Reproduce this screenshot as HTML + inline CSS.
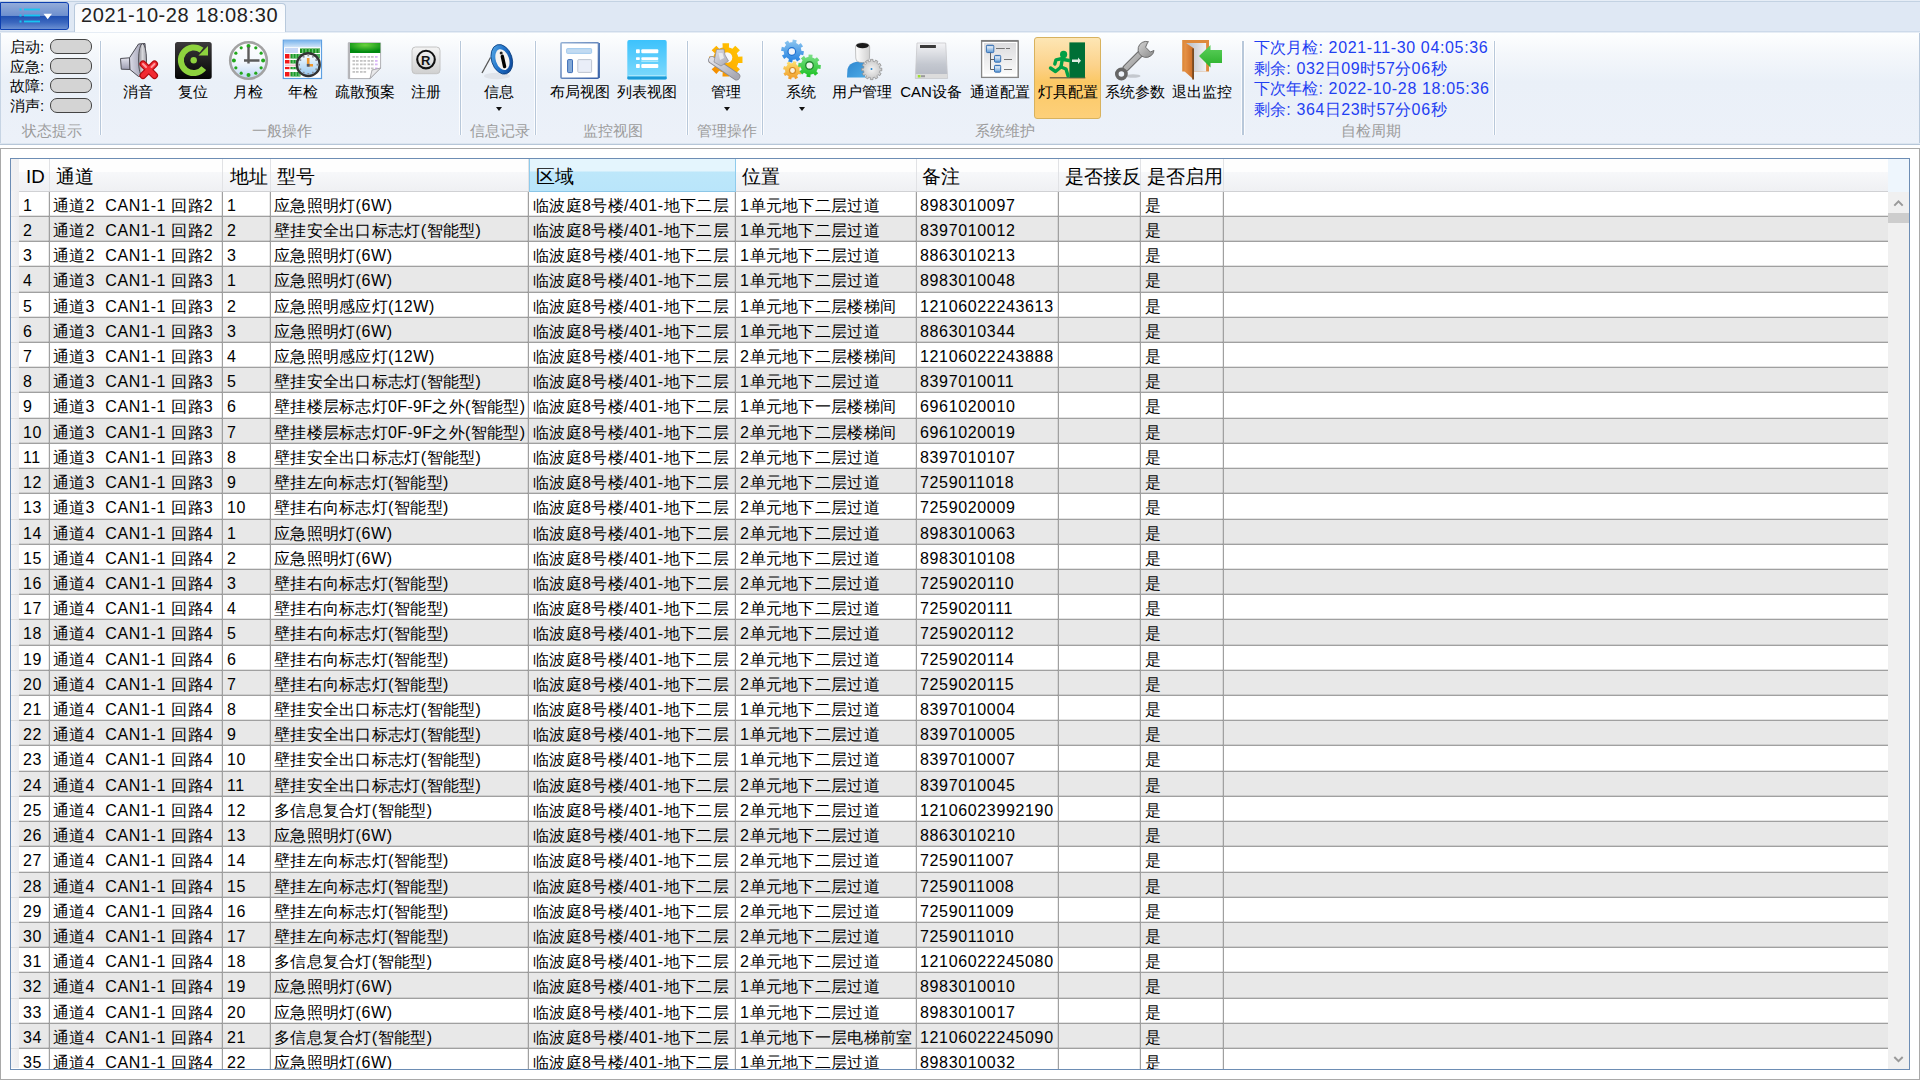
<!DOCTYPE html>
<html><head><meta charset="utf-8"><title>灯具配置</title>
<style>
html,body{margin:0;padding:0}
body{width:1920px;height:1080px;overflow:hidden;position:relative;background:#fff;font-family:'Liberation Sans',sans-serif;color:#000}
.a{position:absolute}
.t{position:absolute;white-space:nowrap;line-height:1}
.lb{position:absolute;white-space:nowrap;line-height:1;font-size:15px;text-align:center}
.gl{position:absolute;white-space:nowrap;line-height:1;font-size:15px;color:#9c9c9c;text-align:center}
.sep{position:absolute;width:1px;top:41px;height:94px;background:#b8c8da}
.pill{position:absolute;left:49.5px;width:40.5px;height:13.5px;border:1.8px solid #444;border-radius:7px;background:#d4d4d4}
.arr{position:absolute;width:0;height:0;border-left:3.5px solid transparent;border-right:3.5px solid transparent;border-top:4px solid #111}
.cell{position:absolute;white-space:nowrap;line-height:1;font-size:16px;letter-spacing:0.3px}
.l{letter-spacing:0.65px}
.hd{position:absolute;white-space:nowrap;line-height:1;font-size:18.7px}
</style></head><body>

<div class="a" style="left:0;top:0;width:1920px;height:31px;background:#dfe8f4"></div>
<div class="a" style="left:0;top:0;width:1920px;height:1px;background:#e6edf6"></div>
<div class="a" style="left:0;top:1px;width:1920px;height:1px;background:#c3d2e2"></div>
<div class="a" style="left:0;top:31px;width:1920px;height:1px;background:#cddaea"></div>
<div class="a" style="left:0;top:2px;width:67px;height:26px;border:1.6px solid #0d3fb0;border-radius:0 3px 3px 0;
background:linear-gradient(#93acd9 0%,#6e90cf 48%,#1f4fb1 50%,#3c68bf 75%,#6b90d2 100%)"></div>
<svg class="a" style="left:0;top:0" width="70" height="31">
<g fill="#17c6f2"><rect x="19.5" y="8.5" width="2" height="2"/><rect x="19.5" y="14.5" width="2" height="2"/><rect x="19.5" y="20.5" width="2" height="2"/>
<rect x="24" y="8.6" width="16" height="1.8"/><rect x="24" y="14.6" width="16" height="1.8"/><rect x="24" y="20.6" width="16" height="1.8"/></g>
<path d="M43.5 13.8 L52 13.8 L47.7 19.3 Z" fill="#fff"/></svg>
<div class="a" style="left:74px;top:3px;width:210px;height:29px;border:1px solid #b8c9dc;border-bottom:none;border-radius:4px 4px 0 0;
background:linear-gradient(#f7f9fc,#fdfeff)"></div>
<div class="t" style="left:81px;top:3px;font-size:20px;letter-spacing:0.6px;color:#222;line-height:24px">2021-10-28 18:08:30</div>
<div class="a" style="left:0;top:32px;width:1918px;height:111px;border-left:1px solid #c6d4e4;border-right:1px solid #b9c9db;
background:linear-gradient(#feffff 0px,#f4f7fb 22px,#eaf0f8 50px,#ecf1f9 100%)"></div>
<div class="a" style="left:0;top:143px;width:1920px;height:1px;background:#dde6f0"></div>
<div class="a" style="left:0;top:144px;width:1920px;height:1px;background:#b7c7d9"></div>
<div class="a" style="left:0;top:32px;width:1920px;height:1px;background:#e6edf5"></div>
<div class="pill" style="top:38.5px"></div>
<div class="t" style="left:10px;top:38.0px;font-size:15px;line-height:18px">启动:</div>
<div class="pill" style="top:58.2px"></div>
<div class="t" style="left:10px;top:57.7px;font-size:15px;line-height:18px">应急:</div>
<div class="pill" style="top:77.9px"></div>
<div class="t" style="left:10px;top:77.4px;font-size:15px;line-height:18px">故障:</div>
<div class="pill" style="top:97.6px"></div>
<div class="t" style="left:10px;top:97.1px;font-size:15px;line-height:18px">消声:</div>
<div class="sep" style="left:100px;width:1px;box-shadow:-1px 0 0 rgba(255,255,255,.8),1px 0 0 rgba(255,255,255,.8)"></div>
<div class="sep" style="left:460px;width:1px;box-shadow:-1px 0 0 rgba(255,255,255,.8),1px 0 0 rgba(255,255,255,.8)"></div>
<div class="sep" style="left:535px;width:1px;box-shadow:-1px 0 0 rgba(255,255,255,.8),1px 0 0 rgba(255,255,255,.8)"></div>
<div class="sep" style="left:687px;width:1px;box-shadow:-1px 0 0 rgba(255,255,255,.8),1px 0 0 rgba(255,255,255,.8)"></div>
<div class="sep" style="left:762px;width:1px;box-shadow:-1px 0 0 rgba(255,255,255,.8),1px 0 0 rgba(255,255,255,.8)"></div>
<div class="sep" style="left:1242px;width:2px;box-shadow:-1px 0 0 rgba(255,255,255,.8),1px 0 0 rgba(255,255,255,.8)"></div>
<div class="sep" style="left:1494px;width:1px;box-shadow:-1px 0 0 rgba(255,255,255,.8),1px 0 0 rgba(255,255,255,.8)"></div>
<div class="gl" style="left:2.0px;width:100px;top:122px;line-height:17px">状态提示</div>
<div class="gl" style="left:232.0px;width:100px;top:122px;line-height:17px">一般操作</div>
<div class="gl" style="left:449.5px;width:100px;top:122px;line-height:17px">信息记录</div>
<div class="gl" style="left:563.0px;width:100px;top:122px;line-height:17px">监控视图</div>
<div class="gl" style="left:676.5px;width:100px;top:122px;line-height:17px">管理操作</div>
<div class="gl" style="left:954.5px;width:100px;top:122px;line-height:17px">系统维护</div>
<div class="gl" style="left:1320.5px;width:100px;top:122px;line-height:17px">自检周期</div>
<div class="a" style="left:1034px;top:37px;width:65px;height:80px;border:1px solid #d8b25e;border-radius:3px;
background:linear-gradient(#fde6b4 0%,#fcd28a 35%,#fbc865 55%,#fdd07a 100%)"></div>
<div class="lb" style="left:98.0px;width:80px;top:83px;line-height:17px">消音</div>
<svg class="a" style="left:115px;top:38px" width="45" height="45" viewBox="0 0 45 45"><defs><linearGradient id="spk1" x1="0" y1="0" x2="0" y2="1"><stop offset="0" stop-color="#e4e4ee"/><stop offset="1" stop-color="#9c9cb0"/></linearGradient>
<linearGradient id="spk2" x1="0" y1="0" x2="1" y2="0"><stop offset="0" stop-color="#dcdce8"/><stop offset="1" stop-color="#8a8aa0"/></linearGradient>
<linearGradient id="spk3" x1="0" y1="0" x2="1" y2="0"><stop offset="0" stop-color="#888890"/><stop offset="0.5" stop-color="#d8d8dc"/><stop offset="1" stop-color="#a0a0a8"/></linearGradient></defs>
<path d="M5.5 20.5 L14.5 19.8 L15 31.5 L6.3 31.2 Z" fill="url(#spk1)" stroke="#505058" stroke-width="1"/>
<path d="M14.5 19.8 L23.5 6 L30 5.5 L31.5 37.5 L23.5 38.5 L15 31.5 Z" fill="url(#spk2)" stroke="#4a4a52" stroke-width="1"/>
<ellipse cx="27.5" cy="22" rx="4" ry="16.3" fill="url(#spk3)" stroke="#55555c" stroke-width="1"/>
<path d="M28 26 L39.5 37.5 M39.5 26 L28 37.5" stroke="#b00a10" stroke-width="7" stroke-linecap="round"/>
<path d="M28 26 L39.5 37.5 M39.5 26 L28 37.5" stroke="#f22a32" stroke-width="4.6" stroke-linecap="round"/>
<path d="M28 26 L31 29 M39.5 26 L36.5 29" stroke="#ff9aa0" stroke-width="2" stroke-linecap="round"/>
</svg>
<div class="lb" style="left:153.0px;width:80px;top:83px;line-height:17px">复位</div>
<svg class="a" style="left:170px;top:38px" width="45" height="45" viewBox="0 0 45 45"><defs><linearGradient id="rs1" x1="0" y1="0" x2="0" y2="1"><stop offset="0" stop-color="#3c3a3c"/><stop offset="1" stop-color="#050505"/></linearGradient></defs>
<rect x="5" y="4" width="36.7" height="37" rx="2.5" fill="url(#rs1)"/>
<path d="M31.58 12.21 A12.8 12.8 0 1 0 33.79 30.18" fill="none" stroke="#8ed33e" stroke-width="6"/>
<path d="M38 8 L38 17.5 L28.5 17.5 Z" fill="#8ed33e"/>
<circle cx="23.7" cy="22.3" r="3.2" fill="#8ed33e"/>
</svg>
<div class="lb" style="left:208.0px;width:80px;top:83px;line-height:17px">月检</div>
<svg class="a" style="left:225px;top:38px" width="45" height="45" viewBox="0 0 45 45"><defs><linearGradient id="ck1" x1="0" y1="0" x2="0" y2="1"><stop offset="0" stop-color="#ffffff"/><stop offset="0.55" stop-color="#f2f7fd"/><stop offset="1" stop-color="#bcd6f3"/></linearGradient></defs>
<circle cx="23.5" cy="22.5" r="18.3" fill="url(#ck1)" stroke="#a2a2a2" stroke-width="2.6"/>
<circle cx="23.50" cy="7.90" r="2.0" fill="#22a81c"/><circle cx="30.80" cy="9.86" r="1.6" fill="#22a81c"/><circle cx="36.14" cy="15.20" r="1.6" fill="#22a81c"/><circle cx="38.10" cy="22.50" r="2.0" fill="#22a81c"/><circle cx="36.14" cy="29.80" r="1.6" fill="#22a81c"/><circle cx="30.80" cy="35.14" r="1.6" fill="#22a81c"/><circle cx="23.50" cy="37.10" r="2.0" fill="#22a81c"/><circle cx="16.20" cy="35.14" r="1.6" fill="#22a81c"/><circle cx="10.86" cy="29.80" r="1.6" fill="#22a81c"/><circle cx="8.90" cy="22.50" r="2.0" fill="#22a81c"/><circle cx="10.86" cy="15.20" r="1.6" fill="#22a81c"/><circle cx="16.20" cy="9.86" r="1.6" fill="#22a81c"/>
<path d="M23.5 9 L23.5 25.5 M19 22.5 L34.5 22.5" stroke="#5c5c5c" stroke-width="2.4"/>
</svg>
<div class="lb" style="left:263.0px;width:80px;top:83px;line-height:17px">年检</div>
<svg class="a" style="left:280px;top:37px" width="45" height="45" viewBox="0 0 45 45"><defs><linearGradient id="yr1" x1="0" y1="0" x2="0" y2="1"><stop offset="0" stop-color="#7fb8ee"/><stop offset="1" stop-color="#d4e6f8"/></linearGradient>
<linearGradient id="yr2" x1="0" y1="0" x2="0" y2="1"><stop offset="0" stop-color="#ffffff"/><stop offset="1" stop-color="#94c6f0"/></linearGradient></defs>
<rect x="3.3" y="3.2" width="38.2" height="38.3" fill="#ffffff" stroke="#5d9fe2" stroke-width="1.2"/>
<rect x="3.9" y="3.8" width="37" height="6.5" fill="url(#yr1)"/>
<rect x="5" y="11" width="13" height="5" fill="#c8d8f6"/>
<rect x="20" y="11.5" width="20" height="4.5" fill="#18901e"/><rect x="22.0" y="11.5" width="1.3" height="4.5" fill="#70c078"/><rect x="25.3" y="11.5" width="1.3" height="4.5" fill="#70c078"/><rect x="28.6" y="11.5" width="1.3" height="4.5" fill="#70c078"/><rect x="31.9" y="11.5" width="1.3" height="4.5" fill="#70c078"/><rect x="35.2" y="11.5" width="1.3" height="4.5" fill="#70c078"/><rect x="38.5" y="11.5" width="1.3" height="4.5" fill="#70c078"/>
<rect x="20" y="17" width="20" height="4.5" fill="#50b060"/>
<rect x="5" y="17" width="4.5" height="4.5" fill="#f21818"/><rect x="9.5" y="17" width="1" height="4.5" fill="#ff8888"/><rect x="10.5" y="17" width="10" height="4.5" fill="#1a9a2a"/><rect x="12.5" y="17" width="1.2" height="4.5" fill="#7cc884"/><rect x="15.5" y="17" width="1.2" height="4.5" fill="#7cc884"/><rect x="18.5" y="17" width="1.2" height="4.5" fill="#7cc884"/><rect x="5" y="23" width="4.5" height="3.5" fill="#f21818"/><rect x="9.5" y="23" width="1" height="3.5" fill="#ff8888"/><rect x="10.5" y="23" width="10" height="3.5" fill="#1a9a2a"/><rect x="12.5" y="23" width="1.2" height="3.5" fill="#7cc884"/><rect x="15.5" y="23" width="1.2" height="3.5" fill="#7cc884"/><rect x="18.5" y="23" width="1.2" height="3.5" fill="#7cc884"/><rect x="5" y="30" width="4.5" height="2.2" fill="#f21818"/><rect x="9.5" y="30" width="1" height="2.2" fill="#ff8888"/><rect x="10.5" y="30" width="10" height="2.2" fill="#1a9a2a"/><rect x="12.5" y="30" width="1.2" height="2.2" fill="#7cc884"/><rect x="15.5" y="30" width="1.2" height="2.2" fill="#7cc884"/><rect x="18.5" y="30" width="1.2" height="2.2" fill="#7cc884"/><rect x="5" y="35" width="4.5" height="4.5" fill="#f21818"/><rect x="9.5" y="35" width="1" height="4.5" fill="#ff8888"/><rect x="10.5" y="35" width="10" height="4.5" fill="#1a9a2a"/><rect x="12.5" y="35" width="1.2" height="4.5" fill="#7cc884"/><rect x="15.5" y="35" width="1.2" height="4.5" fill="#7cc884"/><rect x="18.5" y="35" width="1.2" height="4.5" fill="#7cc884"/><rect x="5" y="27.5" width="15" height="1.8" fill="#f0c8d0"/>
<circle cx="28.3" cy="27.7" r="11.4" fill="url(#yr2)" stroke="#333" stroke-width="2.4"/>
<rect x="27.40" y="17.60" width="1.8" height="1.8" fill="#8a9098"/><rect x="32.00" y="18.83" width="1.8" height="1.8" fill="#8a9098"/><rect x="35.37" y="22.20" width="1.8" height="1.8" fill="#8a9098"/><rect x="36.60" y="26.80" width="1.8" height="1.8" fill="#8a9098"/><rect x="35.37" y="31.40" width="1.8" height="1.8" fill="#8a9098"/><rect x="32.00" y="34.77" width="1.8" height="1.8" fill="#8a9098"/><rect x="27.40" y="36.00" width="1.8" height="1.8" fill="#8a9098"/><rect x="22.80" y="34.77" width="1.8" height="1.8" fill="#8a9098"/><rect x="19.43" y="31.40" width="1.8" height="1.8" fill="#8a9098"/><rect x="18.20" y="26.80" width="1.8" height="1.8" fill="#8a9098"/><rect x="19.43" y="22.20" width="1.8" height="1.8" fill="#8a9098"/><rect x="22.80" y="18.83" width="1.8" height="1.8" fill="#8a9098"/>
<path d="M28.2 21 L28.2 28.5 M28 28.3 L33 28.3" stroke="#f09830" stroke-width="2.6"/>
<rect x="26.8" y="26.9" width="2.8" height="2.8" fill="#505868"/>
</svg>
<div class="lb" style="left:324.5px;width:80px;top:83px;line-height:17px">疏散预案</div>
<svg class="a" style="left:342px;top:37px" width="45" height="45" viewBox="0 0 45 45"><defs><radialGradient id="pl1" cx="0.5" cy="0.2" r="0.7"><stop offset="0" stop-color="#6ad23e"/><stop offset="1" stop-color="#008a10"/></radialGradient></defs>
<path d="M6.3 5.8 L38.6 5.8 L38.6 31 L28 41.6 L6.3 41.6 Z" fill="#ffffff" stroke="#b0b0b4" stroke-width="1"/>
<rect x="6.3" y="5.8" width="1.8" height="35.8" fill="#b4b4b8"/>
<rect x="8" y="6" width="30.3" height="10" fill="url(#pl1)"/>
<rect x="10.5" y="19" width="2.6" height="1.8" fill="#c4c4c4"/><rect x="14" y="19" width="2.6" height="1.8" fill="#c4c4c4"/><rect x="18" y="19" width="2.6" height="1.8" fill="#c4c4c4"/><rect x="21.5" y="19" width="2.6" height="1.8" fill="#c4c4c4"/><rect x="25.5" y="19" width="2.6" height="1.8" fill="#c4c4c4"/><rect x="29" y="19" width="2.6" height="1.8" fill="#c4c4c4"/><rect x="33" y="19" width="2.6" height="1.8" fill="#d8b4f6"/><rect x="10.5" y="23" width="2.6" height="1.8" fill="#c4c4c4"/><rect x="14" y="23" width="2.6" height="1.8" fill="#c4c4c4"/><rect x="18" y="23" width="2.6" height="1.8" fill="#c4c4c4"/><rect x="21.5" y="23" width="2.6" height="1.8" fill="#c4c4c4"/><rect x="25.5" y="23" width="2.6" height="1.8" fill="#c4c4c4"/><rect x="29" y="23" width="2.6" height="1.8" fill="#c4c4c4"/><rect x="33" y="23" width="2.6" height="1.8" fill="#d8b4f6"/><rect x="10.5" y="26.5" width="2.6" height="1.8" fill="#c4c4c4"/><rect x="14" y="26.5" width="2.6" height="1.8" fill="#c4c4c4"/><rect x="18" y="26.5" width="2.6" height="1.8" fill="#c4c4c4"/><rect x="21.5" y="26.5" width="2.6" height="1.8" fill="#c4c4c4"/><rect x="25.5" y="26.5" width="2.6" height="1.8" fill="#c4c4c4"/><rect x="29" y="26.5" width="2.6" height="1.8" fill="#c4c4c4"/><rect x="33" y="26.5" width="2.6" height="1.8" fill="#d8b4f6"/><rect x="10.5" y="30.5" width="2.6" height="1.8" fill="#c4c4c4"/><rect x="14" y="30.5" width="2.6" height="1.8" fill="#c4c4c4"/><rect x="18" y="30.5" width="2.6" height="1.8" fill="#c4c4c4"/><rect x="21.5" y="30.5" width="2.6" height="1.8" fill="#c4c4c4"/><rect x="25.5" y="30.5" width="2.6" height="1.8" fill="#c4c4c4"/><rect x="29" y="30.5" width="2.6" height="1.8" fill="#c4c4c4"/><rect x="33" y="30.5" width="2.6" height="1.8" fill="#d8b4f6"/><rect x="10.5" y="34" width="2.6" height="1.8" fill="#c4c4c4"/><rect x="14" y="34" width="2.6" height="1.8" fill="#c4c4c4"/><rect x="18" y="34" width="2.6" height="1.8" fill="#c4c4c4"/><rect x="21.5" y="34" width="2.6" height="1.8" fill="#c4c4c4"/>
<path d="M28 41.6 L30 33 L38.6 31 Z" fill="#e8e8ea" stroke="#9a9a9e" stroke-width="0.8"/>
</svg>
<div class="lb" style="left:385.5px;width:80px;top:83px;line-height:17px">注册</div>
<svg class="a" style="left:404px;top:40px" width="45" height="45" viewBox="0 0 45 45"><defs><linearGradient id="rg1" x1="0" y1="0" x2="0" y2="1"><stop offset="0" stop-color="#f4f4f4"/><stop offset="1" stop-color="#d0d0d0"/></linearGradient></defs>
<rect x="8" y="7" width="28" height="26.7" rx="3.5" fill="url(#rg1)" stroke="#c4c4c4" stroke-width="1"/>
<circle cx="22" cy="19.6" r="8.8" fill="none" stroke="#111" stroke-width="2.1"/>
<text x="21.8" y="24.6" font-family="Liberation Sans" font-weight="bold" font-size="13" text-anchor="middle" fill="#111">R</text>
</svg>
<div class="lb" style="left:458.5px;width:80px;top:83px;line-height:17px">信息</div>
<svg class="a" style="left:476px;top:38px" width="45" height="45" viewBox="0 0 45 45"><defs><linearGradient id="in1" x1="0" y1="0" x2="1" y2="1"><stop offset="0" stop-color="#5fb2ea"/><stop offset="0.5" stop-color="#1f70c8"/><stop offset="1" stop-color="#0a3c8a"/></linearGradient></defs>
<ellipse cx="21" cy="38" rx="13" ry="3.2" fill="#dfe3ea"/>
<path d="M6 35 L14.5 19.5" stroke="#555" stroke-width="1.3"/>
<g transform="rotate(-18 25.8 21.3)">
<ellipse cx="25.8" cy="21.3" rx="10.3" ry="15.2" fill="url(#in1)" stroke="#0b3f80" stroke-width="0.8"/>
<ellipse cx="26.3" cy="21.8" rx="6.6" ry="10.8" fill="#f4f2f0"/>
</g>
<circle cx="25.2" cy="15" r="1.5" fill="#222"/>
<path d="M26.3 18.3 L28.6 28.6" stroke="#000" stroke-width="3.4" stroke-linecap="round"/>
</svg>
<div class="arr" style="left:496.0px;top:106.8px"></div>
<div class="lb" style="left:539.5px;width:80px;top:83px;line-height:17px">布局视图</div>
<svg class="a" style="left:557px;top:38px" width="45" height="45" viewBox="0 0 45 45"><defs><linearGradient id="ly1" x1="0" y1="0" x2="1" y2="1"><stop offset="0" stop-color="#94b0d4"/><stop offset="1" stop-color="#3a62a8"/></linearGradient></defs>
<rect x="42" y="5" width="1" height="35" fill="#4e76b2"/>
<rect x="4" y="4.8" width="37.5" height="35.4" rx="1" fill="#ffffff" stroke="url(#ly1)" stroke-width="1.6"/>
<rect x="9.6" y="10.6" width="25" height="4.8" rx="0.8" fill="#c2dbf2" stroke="#9cc6ec" stroke-width="0.9"/>
<rect x="10.6" y="21.6" width="4.9" height="13" rx="0.8" fill="#84aad8" stroke="#2a5fb0" stroke-width="0.9"/>
<rect x="20.8" y="21.6" width="13.8" height="12.8" rx="0.8" fill="#e9eef8" stroke="#b8c0cc" stroke-width="0.9"/>
</svg>
<div class="lb" style="left:606.5px;width:80px;top:83px;line-height:17px">列表视图</div>
<svg class="a" style="left:624px;top:37px" width="45" height="45" viewBox="0 0 45 45"><defs><linearGradient id="ls1" x1="0" y1="0" x2="0" y2="1"><stop offset="0" stop-color="#3dc2fc"/><stop offset="1" stop-color="#80dafc"/></linearGradient></defs>
<rect x="3.3" y="3.1" width="39.4" height="39.4" rx="1.8" fill="url(#ls1)"/>
<rect x="3.3" y="39.2" width="39.4" height="3.3" rx="1.2" fill="#1b9ad8"/>
<rect x="4.5" y="38" width="37" height="1.3" fill="#a8e6fc"/>
<g fill="#ffffff"><rect x="12" y="12.3" width="3.8" height="4" rx="0.7"/><rect x="17.3" y="12.3" width="17" height="4" rx="1"/>
<rect x="12" y="20.3" width="3.8" height="2.6" rx="0.6"/><rect x="17.3" y="20.3" width="17" height="2.6" rx="1"/>
<rect x="12" y="27" width="3.8" height="4" rx="0.7"/><rect x="17.3" y="27" width="17" height="4" rx="1"/></g>
<rect x="17.3" y="23.5" width="17" height="1.3" fill="#b4ecfc"/>
</svg>
<div class="lb" style="left:686.0px;width:80px;top:83px;line-height:17px">管理</div>
<svg class="a" style="left:703px;top:38px" width="45" height="45" viewBox="0 0 45 45"><defs><linearGradient id="mg1" x1="1" y1="0" x2="0" y2="1"><stop offset="0" stop-color="#ffc800"/><stop offset="0.55" stop-color="#ffb000"/><stop offset="1" stop-color="#ee7a00"/></linearGradient>
<linearGradient id="mg2" x1="0" y1="0" x2="1" y2="1"><stop offset="0" stop-color="#e0e0e8"/><stop offset="1" stop-color="#a8a8b2"/></linearGradient></defs>
<path d="M17.90 9.97 L19.69 9.38 L19.48 5.13 L26.12 5.13 L25.91 9.38 L27.70 9.97 L29.38 10.82 L32.24 7.67 L36.93 12.36 L33.78 15.22 L34.63 16.90 L35.22 18.69 L39.47 18.48 L39.47 25.12 L35.22 24.91 L34.63 26.70 L33.78 28.38 L36.93 31.24 L32.24 35.93 L29.38 32.78 L27.70 33.63 L25.91 34.22 L26.12 38.47 L19.48 38.47 L19.69 34.22 L17.90 33.63 L16.22 32.78 L13.36 35.93 L8.67 31.24 L11.82 28.38 L10.97 26.70 L10.38 24.91 L6.13 25.12 L6.13 18.48 L10.38 18.69 L10.97 16.90 L11.82 15.22 L8.67 12.36 L13.36 7.67 L16.22 10.82 Z" fill="url(#mg1)"/>
<circle cx="24" cy="19.5" r="5.3" fill="#f6f7fa"/>
<path d="M9 22 L33.5 38.5" stroke="#8a8a92" stroke-width="7.6" stroke-linecap="round"/>
<path d="M9 22 L33.5 38.5" stroke="url(#mg2)" stroke-width="6" stroke-linecap="round"/>
<path d="M13.5 11.5 L21 11 L22 17 L25.5 23 L18 28 L11 24 Z" fill="url(#mg2)" stroke="#8a8a92" stroke-width="0.7"/>
<path d="M15.5 15 L19.5 15 L21 20 L17 22 Z" fill="#e8eaee"/>
</svg>
<div class="arr" style="left:723.5px;top:106.8px"></div>
<div class="lb" style="left:761.0px;width:80px;top:83px;line-height:17px">系统</div>
<svg class="a" style="left:778px;top:37px" width="45" height="45" viewBox="0 0 45 45"><defs><linearGradient id="sy1" x1="0" y1="0" x2="0" y2="1"><stop offset="0" stop-color="#90c8f0"/><stop offset="1" stop-color="#1f7ee0"/></linearGradient>
<linearGradient id="sy2" x1="0" y1="0" x2="0" y2="1"><stop offset="0" stop-color="#7ee08a"/><stop offset="1" stop-color="#18c020"/></linearGradient>
<linearGradient id="sy3" x1="0" y1="0" x2="0" y2="1"><stop offset="0" stop-color="#fce070"/><stop offset="1" stop-color="#f09a28"/></linearGradient></defs>
<path d="M23.14 12.31 L23.30 13.82 L26.00 14.27 L25.19 18.23 L22.53 17.60 L21.80 18.92 L20.85 20.09 L22.44 22.32 L19.07 24.55 L17.64 22.22 L16.19 22.64 L14.68 22.80 L14.23 25.50 L10.27 24.69 L10.90 22.03 L9.58 21.30 L8.41 20.35 L6.18 21.94 L3.95 18.57 L6.28 17.14 L5.86 15.69 L5.70 14.18 L3.00 13.73 L3.81 9.77 L6.47 10.40 L7.20 9.08 L8.15 7.91 L6.56 5.68 L9.93 3.45 L11.36 5.78 L12.81 5.36 L14.32 5.20 L14.77 2.50 L18.73 3.31 L18.10 5.97 L19.42 6.70 L20.59 7.65 L22.82 6.06 L25.05 9.43 L22.72 10.86 Z" fill="url(#sy1)"/><circle cx="13.8" cy="14.5" r="3.8" fill="#f0f4fa" stroke="#1d70d0" stroke-width="1.2"/>
<path d="M21.47 32.63 L21.48 33.87 L23.53 34.44 L22.56 37.57 L20.55 36.88 L19.84 37.90 L18.97 38.78 L20.02 40.63 L17.13 42.16 L16.18 40.25 L14.97 40.47 L13.73 40.48 L13.16 42.53 L10.03 41.56 L10.72 39.55 L9.70 38.84 L8.82 37.97 L6.97 39.02 L5.44 36.13 L7.35 35.18 L7.13 33.97 L7.12 32.73 L5.07 32.16 L6.04 29.03 L8.05 29.72 L8.76 28.70 L9.63 27.82 L8.58 25.97 L11.47 24.44 L12.42 26.35 L13.63 26.13 L14.87 26.12 L15.44 24.07 L18.57 25.04 L17.88 27.05 L18.90 27.76 L19.78 28.63 L21.63 27.58 L23.16 30.47 L21.25 31.42 Z" fill="url(#sy3)"/><circle cx="14.5" cy="33.5" r="3" fill="#fbf2e0" stroke="#d88a20" stroke-width="1.2"/>
<path d="M39.93 26.26 L40.24 27.74 L42.87 27.93 L42.47 31.91 L39.85 31.58 L39.25 32.96 L38.43 34.23 L40.16 36.22 L37.05 38.76 L35.44 36.67 L34.04 37.23 L32.56 37.54 L32.37 40.17 L28.39 39.77 L28.72 37.15 L27.34 36.55 L26.07 35.73 L24.08 37.46 L21.54 34.35 L23.63 32.74 L23.07 31.34 L22.76 29.86 L20.13 29.67 L20.53 25.69 L23.15 26.02 L23.75 24.64 L24.57 23.37 L22.84 21.38 L25.95 18.84 L27.56 20.93 L28.96 20.37 L30.44 20.06 L30.63 17.43 L34.61 17.83 L34.28 20.45 L35.66 21.05 L36.93 21.87 L38.92 20.14 L41.46 23.25 L39.37 24.86 Z" fill="url(#sy2)"/><circle cx="31.5" cy="28.5" r="3.8" fill="#eef6ee" stroke="#228830" stroke-width="1.4"/>
</svg>
<div class="arr" style="left:798.5px;top:106.8px"></div>
<div class="lb" style="left:822.0px;width:80px;top:83px;line-height:17px">用户管理</div>
<svg class="a" style="left:842px;top:38px" width="45" height="45" viewBox="0 0 45 45"><defs><linearGradient id="us1" x1="0" y1="0" x2="1" y2="1"><stop offset="0" stop-color="#2f86cf"/><stop offset="1" stop-color="#4aaae6"/></linearGradient>
<linearGradient id="us2" x1="0" y1="0" x2="1" y2="0"><stop offset="0" stop-color="#ffffff"/><stop offset="1" stop-color="#d0d0d0"/></linearGradient>
<radialGradient id="us3" cx="0.5" cy="0.5" r="0.5"><stop offset="0" stop-color="#f4f4f4"/><stop offset="1" stop-color="#c8c8c8"/></radialGradient></defs>
<path d="M5 39.5 L5.5 31 Q7 25 14.5 23.8 L22 23.8 L23.3 39.6 Z" fill="url(#us1)"/>
<path d="M13.5 9 Q13.5 5 20.5 5 Q27.7 5 27.7 9 L27.5 20 Q27 24.6 20.5 24.6 Q14 24.6 13.8 20 Z" fill="url(#us2)" stroke="#9a9a9a" stroke-width="0.6"/>
<ellipse cx="20.5" cy="7.6" rx="6.3" ry="2.6" fill="#1a1a1a"/>
<path d="M37.62 29.38 L37.79 30.16 L39.81 30.17 L39.81 32.83 L37.79 32.84 L37.62 33.62 L37.37 34.39 L39.12 35.40 L37.79 37.71 L36.04 36.70 L35.50 37.30 L34.90 37.84 L35.91 39.59 L33.60 40.92 L32.59 39.17 L31.82 39.42 L31.04 39.59 L31.03 41.61 L28.37 41.61 L28.36 39.59 L27.58 39.42 L26.81 39.17 L25.80 40.92 L23.49 39.59 L24.50 37.84 L23.90 37.30 L23.36 36.70 L21.61 37.71 L20.28 35.40 L22.03 34.39 L21.78 33.62 L21.61 32.84 L19.59 32.83 L19.59 30.17 L21.61 30.16 L21.78 29.38 L22.03 28.61 L20.28 27.60 L21.61 25.29 L23.36 26.30 L23.90 25.70 L24.50 25.16 L23.49 23.41 L25.80 22.08 L26.81 23.83 L27.58 23.58 L28.36 23.41 L28.37 21.39 L31.03 21.39 L31.04 23.41 L31.82 23.58 L32.59 23.83 L33.60 22.08 L35.91 23.41 L34.90 25.16 L35.50 25.70 L36.04 26.30 L37.79 25.29 L39.12 27.60 L37.37 28.61 Z" fill="url(#us3)" stroke="#8a8a8a" stroke-width="0.7"/>
<circle cx="29.5" cy="31" r="1" fill="#2a88d0"/>
</svg>
<div class="lb" style="left:891.0px;width:80px;top:83px;line-height:17px">CAN设备</div>
<svg class="a" style="left:908px;top:38px" width="45" height="45" viewBox="0 0 45 45"><defs><linearGradient id="cn1" x1="0" y1="0" x2="0" y2="1"><stop offset="0" stop-color="#f4f4f6"/><stop offset="0.6" stop-color="#c4c8d0"/><stop offset="1" stop-color="#b4b8c2"/></linearGradient></defs>
<path d="M9 5 L37.7 5 L39.6 40.4 L7.3 40.4 Z" fill="url(#cn1)" stroke="#c8c8cc" stroke-width="0.8"/>
<rect x="12" y="7" width="15.9" height="3" fill="#3a3a3a"/>
<rect x="7.6" y="36" width="31.8" height="4.2" fill="#dcdcdc"/>
<rect x="9.8" y="37" width="2.7" height="2.5" fill="#9ee030"/>
<rect x="13" y="37.2" width="4" height="2" fill="#9a9a9a"/>
</svg>
<div class="lb" style="left:960.0px;width:80px;top:83px;line-height:17px">通道配置</div>
<svg class="a" style="left:977px;top:37px" width="45" height="45" viewBox="0 0 45 45"><defs><linearGradient id="ch1" x1="0" y1="0" x2="0" y2="1"><stop offset="0" stop-color="#dcdcde"/><stop offset="1" stop-color="#fafafa"/></linearGradient>
<linearGradient id="ch2" x1="0" y1="0" x2="0" y2="1"><stop offset="0" stop-color="#2e6eb8"/><stop offset="0.2" stop-color="#e4eef8"/><stop offset="1" stop-color="#5c98d4"/></linearGradient></defs>
<rect x="40.5" y="4" width="1.5" height="37" fill="#8a8a8a"/>
<rect x="4.6" y="3.6" width="36.5" height="36.8" fill="#ffffff" stroke="#878787" stroke-width="1.3"/>
<rect x="4.6" y="3.2" width="36.5" height="1.6" fill="#7c7c7c"/>
<rect x="7" y="6" width="32" height="31" fill="url(#ch1)"/>
<path d="M13.5 15.5 L13.5 32.5 L17.5 32.5 M13.5 22.5 L17.5 22.5" fill="none" stroke="#606060" stroke-width="1"/>
<g fill="url(#ch2)" stroke="#2a66ae" stroke-width="0.9">
<rect x="9.4" y="8.2" width="7.4" height="7.4" rx="1"/><rect x="17.5" y="18.4" width="6.2" height="6.8" rx="1"/><rect x="17.5" y="28.3" width="6.2" height="6.9" rx="1"/></g>
<g stroke="#666" stroke-width="0.9"><path d="M19 11.5 L27.8 11.5 M29 11.5 L33 11.5 M27 22.5 L35 22.5 M27 32.5 L35 32.5"/></g>
</svg>
<div class="lb" style="left:1027.5px;width:80px;top:83px;line-height:17px">灯具配置</div>
<svg class="a" style="left:1045px;top:38px" width="45" height="45" viewBox="0 0 45 45">
<rect x="4.8" y="39" width="35.5" height="1.5" fill="#7a6a48"/>
<rect x="24.4" y="4.4" width="15.6" height="35.2" fill="#006f36"/>
<path d="M27 21.5 L33 21.5 L33 19.5 L36 22.8 L33 26 L33 24 L27 24 Z" fill="#e0ece2"/>
<circle cx="18.6" cy="16.4" r="3.6" fill="#00a046"/>
<g stroke="#00a046" stroke-width="3.4" stroke-linecap="round" stroke-linejoin="round" fill="none">
<path d="M17.5 20 L16 29"/><path d="M17.3 20.5 L11 21.8 L9.8 26"/><path d="M18.5 21.5 L24 22.5"/>
<path d="M16 29 L10.5 33.5 L5.5 30"/><path d="M16 29 L21 31 L23 37.8"/></g>
</svg>
<div class="lb" style="left:1095.0px;width:80px;top:83px;line-height:17px">系统参数</div>
<svg class="a" style="left:1112px;top:37px" width="45" height="45" viewBox="0 0 45 45"><defs><linearGradient id="pm1" x1="0" y1="0" x2="1" y2="1"><stop offset="0" stop-color="#d4d4d4"/><stop offset="1" stop-color="#8a8a8a"/></linearGradient>
<linearGradient id="pm2" x1="0" y1="0" x2="1" y2="1"><stop offset="0" stop-color="#c8c8c8"/><stop offset="1" stop-color="#9a9a9a"/></linearGradient></defs>
<ellipse cx="21" cy="39" rx="7.5" ry="1.8" fill="#c4c8ce"/>
<path d="M14 31 L29.5 15.5" stroke="#6e6e6e" stroke-width="7" stroke-linecap="round"/>
<path d="M14 31 L29.5 15.5" stroke="url(#pm2)" stroke-width="4.6" stroke-linecap="round"/>
<circle cx="9.4" cy="37" r="4.6" fill="none" stroke="#666" stroke-width="3.6"/>
<path d="M36.5 4.8 A8 8 0 1 0 42 13.5 L38.3 15 L33.6 10.2 L35.6 5.5 Z" fill="url(#pm1)" stroke="#6e6e6e" stroke-width="1"/>
</svg>
<div class="lb" style="left:1162.0px;width:80px;top:83px;line-height:17px">退出监控</div>
<svg class="a" style="left:1180px;top:37px" width="45" height="45" viewBox="0 0 45 45"><defs><linearGradient id="ex1" x1="0" y1="0" x2="1" y2="0"><stop offset="0" stop-color="#b8bcc4"/><stop offset="1" stop-color="#f0f0f2"/></linearGradient>
<linearGradient id="ex2" x1="0" y1="0" x2="1" y2="0"><stop offset="0" stop-color="#e89448"/><stop offset="1" stop-color="#c86a24"/></linearGradient>
<linearGradient id="ex3" x1="0" y1="0" x2="0" y2="1"><stop offset="0" stop-color="#5ed05e"/><stop offset="1" stop-color="#28b028"/></linearGradient></defs>
<rect x="2.2" y="3" width="26.8" height="31.5" fill="#de8a3c"/>
<rect x="6.3" y="6" width="19.8" height="28.5" fill="url(#ex1)"/>
<path d="M4.6 5.2 L13.8 11.3 L13.8 42.5 L4.6 34.5 Z" fill="url(#ex2)"/>
<rect x="12.2" y="11.5" width="1.8" height="31" fill="#7a4a20"/>
<path d="M19 19 L30.5 8 L30.5 13 L42 13 L42 26 L30.5 26 L30.5 30.5 Z" fill="url(#ex3)"/>
</svg>
<div class="t" style="left:1254px;top:38.0px;font-size:16px;letter-spacing:0.1px;line-height:19px;color:#1f3ff2">下次月检<span class="l">: 2021-11-30 04:05:36</span></div>
<div class="t" style="left:1254px;top:58.5px;font-size:16px;letter-spacing:0.1px;line-height:19px;color:#1f3ff2">剩余<span class="l">: 032</span>日<span class="l">09</span>时<span class="l">57</span>分<span class="l">06</span>秒</div>
<div class="t" style="left:1254px;top:79.1px;font-size:16px;letter-spacing:0.1px;line-height:19px;color:#1f3ff2">下次年检<span class="l">: 2022-10-28 18:05:36</span></div>
<div class="t" style="left:1254px;top:99.7px;font-size:16px;letter-spacing:0.1px;line-height:19px;color:#1f3ff2">剩余<span class="l">: 364</span>日<span class="l">23</span>时<span class="l">57</span>分<span class="l">06</span>秒</div>
<div class="a" style="left:0;top:148px;width:1918px;height:930px;border:1px solid #a9a9a9;background:#fff"></div>
<div class="a" style="left:10px;top:158px;width:1898px;height:910px;border:1px solid #6d8db4;background:#fff"></div>
<div class="a" style="left:11px;top:159px;width:1877px;height:13px;background:#fefefe"></div>
<div class="a" style="left:11px;top:172px;width:1877px;height:19px;background:linear-gradient(#f7f8fa,#eff0f3)"></div>
<div class="a" style="left:11px;top:191px;width:1877px;height:1px;background:#d0d1d4"></div>
<div class="a" style="left:1888px;top:159px;width:21px;height:33px;background:#eef6fd"></div>
<div class="a" style="left:49px;top:159px;width:1px;height:32px;background:#e1e2e5"></div>
<div class="a" style="left:222px;top:159px;width:1px;height:32px;background:#e1e2e5"></div>
<div class="a" style="left:270px;top:159px;width:1px;height:32px;background:#e1e2e5"></div>
<div class="a" style="left:528px;top:159px;width:1px;height:32px;background:#e1e2e5"></div>
<div class="a" style="left:735px;top:159px;width:1px;height:32px;background:#e1e2e5"></div>
<div class="a" style="left:916px;top:159px;width:1px;height:32px;background:#e1e2e5"></div>
<div class="a" style="left:1058px;top:159px;width:1px;height:32px;background:#e1e2e5"></div>
<div class="a" style="left:1140px;top:159px;width:1px;height:32px;background:#e1e2e5"></div>
<div class="a" style="left:1223px;top:159px;width:1px;height:32px;background:#e1e2e5"></div>
<div class="a" style="left:529px;top:159px;width:205px;height:31px;border:1px solid #8fcbec;border-top:none;height:32px;border-bottom:1px solid #8cc6e6;
background:linear-gradient(#e4f5fd 0,#e4f5fd 12px,#bde7fa 13px,#b9e5fa 100%)"></div>
<div class="hd" style="left:26px;top:165.8px;line-height:22px">ID</div>
<div class="hd" style="left:56px;top:165.8px;line-height:22px">通道</div>
<div class="hd" style="left:230px;top:165.8px;line-height:22px">地址</div>
<div class="hd" style="left:277px;top:165.8px;line-height:22px">型号</div>
<div class="hd" style="left:536px;top:165.8px;line-height:22px">区域</div>
<div class="hd" style="left:742px;top:165.8px;line-height:22px">位置</div>
<div class="hd" style="left:922px;top:165.8px;line-height:22px">备注</div>
<div class="hd" style="left:1065px;top:165.8px;line-height:22px">是否接反</div>
<div class="hd" style="left:1147px;top:165.8px;line-height:22px">是否启用</div>
<div class="a" style="left:11px;top:159px;width:8px;height:909px;background:linear-gradient(90deg,#f4f4f6,#ececee)"></div>
<div class="a" style="left:11px;top:159px;width:8px;height:32px;background:linear-gradient(90deg,#f1f1f3,#efeff1)"></div>
<div class="a" style="left:19px;top:192px;width:1869px;height:24px;background:#ffffff"></div>
<div class="a" style="left:19px;top:215px;width:1869px;height:1px;background:rgba(0,0,0,0.11)"></div>
<div class="a" style="left:19px;top:216px;width:1869px;height:1px;background:#a0a0a0"></div>
<div class="a" style="left:11px;top:216px;width:8px;height:1px;background:#dedede"></div>
<div class="cell" style="left:23px;top:195.5px;line-height:20px"><span class="l">1</span></div>
<div class="cell" style="left:53px;top:195.5px;line-height:20px">通道<span class="l">2&nbsp;&nbsp;CAN1-1 </span>回路<span class="l">2</span></div>
<div class="cell" style="left:227px;top:195.5px;line-height:20px"><span class="l">1</span></div>
<div class="cell" style="left:274px;top:195.5px;line-height:20px">应急照明灯<span class="l">(6W)</span></div>
<div class="cell" style="left:533px;top:195.5px;line-height:20px">临波庭<span class="l">8</span>号楼<span class="l">/401-</span>地下二层</div>
<div class="cell" style="left:740px;top:195.5px;line-height:20px"><span class="l">1</span>单元地下二层过道</div>
<div class="cell" style="left:920px;top:195.5px;line-height:20px"><span class="l">8983010097</span></div>
<div class="cell" style="left:1144.5px;top:195.5px;line-height:20px">是</div>
<div class="a" style="left:19px;top:217px;width:1869px;height:24px;background:#e8e8e8"></div>
<div class="a" style="left:19px;top:240px;width:1869px;height:1px;background:rgba(0,0,0,0.11)"></div>
<div class="a" style="left:19px;top:241px;width:1869px;height:1px;background:#a0a0a0"></div>
<div class="a" style="left:11px;top:241px;width:8px;height:1px;background:#dedede"></div>
<div class="cell" style="left:23px;top:220.5px;line-height:20px"><span class="l">2</span></div>
<div class="cell" style="left:53px;top:220.5px;line-height:20px">通道<span class="l">2&nbsp;&nbsp;CAN1-1 </span>回路<span class="l">2</span></div>
<div class="cell" style="left:227px;top:220.5px;line-height:20px"><span class="l">2</span></div>
<div class="cell" style="left:274px;top:220.5px;line-height:20px">壁挂安全出口标志灯<span class="l">(</span>智能型<span class="l">)</span></div>
<div class="cell" style="left:533px;top:220.5px;line-height:20px">临波庭<span class="l">8</span>号楼<span class="l">/401-</span>地下二层</div>
<div class="cell" style="left:740px;top:220.5px;line-height:20px"><span class="l">1</span>单元地下二层过道</div>
<div class="cell" style="left:920px;top:220.5px;line-height:20px"><span class="l">8397010012</span></div>
<div class="cell" style="left:1144.5px;top:220.5px;line-height:20px">是</div>
<div class="a" style="left:19px;top:242px;width:1869px;height:24px;background:#ffffff"></div>
<div class="a" style="left:19px;top:265px;width:1869px;height:1px;background:rgba(0,0,0,0.11)"></div>
<div class="a" style="left:19px;top:266px;width:1869px;height:1px;background:#a0a0a0"></div>
<div class="a" style="left:11px;top:266px;width:8px;height:1px;background:#dedede"></div>
<div class="cell" style="left:23px;top:245.5px;line-height:20px"><span class="l">3</span></div>
<div class="cell" style="left:53px;top:245.5px;line-height:20px">通道<span class="l">2&nbsp;&nbsp;CAN1-1 </span>回路<span class="l">2</span></div>
<div class="cell" style="left:227px;top:245.5px;line-height:20px"><span class="l">3</span></div>
<div class="cell" style="left:274px;top:245.5px;line-height:20px">应急照明灯<span class="l">(6W)</span></div>
<div class="cell" style="left:533px;top:245.5px;line-height:20px">临波庭<span class="l">8</span>号楼<span class="l">/401-</span>地下二层</div>
<div class="cell" style="left:740px;top:245.5px;line-height:20px"><span class="l">1</span>单元地下二层过道</div>
<div class="cell" style="left:920px;top:245.5px;line-height:20px"><span class="l">8863010213</span></div>
<div class="cell" style="left:1144.5px;top:245.5px;line-height:20px">是</div>
<div class="a" style="left:19px;top:267px;width:1869px;height:25px;background:#e8e8e8"></div>
<div class="a" style="left:19px;top:291px;width:1869px;height:1px;background:rgba(0,0,0,0.11)"></div>
<div class="a" style="left:19px;top:292px;width:1869px;height:1px;background:#a0a0a0"></div>
<div class="a" style="left:11px;top:292px;width:8px;height:1px;background:#dedede"></div>
<div class="cell" style="left:23px;top:270.5px;line-height:20px"><span class="l">4</span></div>
<div class="cell" style="left:53px;top:270.5px;line-height:20px">通道<span class="l">3&nbsp;&nbsp;CAN1-1 </span>回路<span class="l">3</span></div>
<div class="cell" style="left:227px;top:270.5px;line-height:20px"><span class="l">1</span></div>
<div class="cell" style="left:274px;top:270.5px;line-height:20px">应急照明灯<span class="l">(6W)</span></div>
<div class="cell" style="left:533px;top:270.5px;line-height:20px">临波庭<span class="l">8</span>号楼<span class="l">/401-</span>地下二层</div>
<div class="cell" style="left:740px;top:270.5px;line-height:20px"><span class="l">1</span>单元地下二层过道</div>
<div class="cell" style="left:920px;top:270.5px;line-height:20px"><span class="l">8983010048</span></div>
<div class="cell" style="left:1144.5px;top:270.5px;line-height:20px">是</div>
<div class="a" style="left:19px;top:293px;width:1869px;height:24px;background:#ffffff"></div>
<div class="a" style="left:19px;top:316px;width:1869px;height:1px;background:rgba(0,0,0,0.11)"></div>
<div class="a" style="left:19px;top:317px;width:1869px;height:1px;background:#a0a0a0"></div>
<div class="a" style="left:11px;top:317px;width:8px;height:1px;background:#dedede"></div>
<div class="cell" style="left:23px;top:296.5px;line-height:20px"><span class="l">5</span></div>
<div class="cell" style="left:53px;top:296.5px;line-height:20px">通道<span class="l">3&nbsp;&nbsp;CAN1-1 </span>回路<span class="l">3</span></div>
<div class="cell" style="left:227px;top:296.5px;line-height:20px"><span class="l">2</span></div>
<div class="cell" style="left:274px;top:296.5px;line-height:20px">应急照明感应灯<span class="l">(12W)</span></div>
<div class="cell" style="left:533px;top:296.5px;line-height:20px">临波庭<span class="l">8</span>号楼<span class="l">/401-</span>地下二层</div>
<div class="cell" style="left:740px;top:296.5px;line-height:20px"><span class="l">1</span>单元地下二层楼梯间</div>
<div class="cell" style="left:920px;top:296.5px;line-height:20px"><span class="l">12106022243613</span></div>
<div class="cell" style="left:1144.5px;top:296.5px;line-height:20px">是</div>
<div class="a" style="left:19px;top:318px;width:1869px;height:24px;background:#e8e8e8"></div>
<div class="a" style="left:19px;top:341px;width:1869px;height:1px;background:rgba(0,0,0,0.11)"></div>
<div class="a" style="left:19px;top:342px;width:1869px;height:1px;background:#a0a0a0"></div>
<div class="a" style="left:11px;top:342px;width:8px;height:1px;background:#dedede"></div>
<div class="cell" style="left:23px;top:321.5px;line-height:20px"><span class="l">6</span></div>
<div class="cell" style="left:53px;top:321.5px;line-height:20px">通道<span class="l">3&nbsp;&nbsp;CAN1-1 </span>回路<span class="l">3</span></div>
<div class="cell" style="left:227px;top:321.5px;line-height:20px"><span class="l">3</span></div>
<div class="cell" style="left:274px;top:321.5px;line-height:20px">应急照明灯<span class="l">(6W)</span></div>
<div class="cell" style="left:533px;top:321.5px;line-height:20px">临波庭<span class="l">8</span>号楼<span class="l">/401-</span>地下二层</div>
<div class="cell" style="left:740px;top:321.5px;line-height:20px"><span class="l">1</span>单元地下二层过道</div>
<div class="cell" style="left:920px;top:321.5px;line-height:20px"><span class="l">8863010344</span></div>
<div class="cell" style="left:1144.5px;top:321.5px;line-height:20px">是</div>
<div class="a" style="left:19px;top:343px;width:1869px;height:24px;background:#ffffff"></div>
<div class="a" style="left:19px;top:366px;width:1869px;height:1px;background:rgba(0,0,0,0.11)"></div>
<div class="a" style="left:19px;top:367px;width:1869px;height:1px;background:#a0a0a0"></div>
<div class="a" style="left:11px;top:367px;width:8px;height:1px;background:#dedede"></div>
<div class="cell" style="left:23px;top:346.5px;line-height:20px"><span class="l">7</span></div>
<div class="cell" style="left:53px;top:346.5px;line-height:20px">通道<span class="l">3&nbsp;&nbsp;CAN1-1 </span>回路<span class="l">3</span></div>
<div class="cell" style="left:227px;top:346.5px;line-height:20px"><span class="l">4</span></div>
<div class="cell" style="left:274px;top:346.5px;line-height:20px">应急照明感应灯<span class="l">(12W)</span></div>
<div class="cell" style="left:533px;top:346.5px;line-height:20px">临波庭<span class="l">8</span>号楼<span class="l">/401-</span>地下二层</div>
<div class="cell" style="left:740px;top:346.5px;line-height:20px"><span class="l">2</span>单元地下二层楼梯间</div>
<div class="cell" style="left:920px;top:346.5px;line-height:20px"><span class="l">12106022243888</span></div>
<div class="cell" style="left:1144.5px;top:346.5px;line-height:20px">是</div>
<div class="a" style="left:19px;top:368px;width:1869px;height:24px;background:#e8e8e8"></div>
<div class="a" style="left:19px;top:391px;width:1869px;height:1px;background:rgba(0,0,0,0.11)"></div>
<div class="a" style="left:19px;top:392px;width:1869px;height:1px;background:#a0a0a0"></div>
<div class="a" style="left:11px;top:392px;width:8px;height:1px;background:#dedede"></div>
<div class="cell" style="left:23px;top:371.5px;line-height:20px"><span class="l">8</span></div>
<div class="cell" style="left:53px;top:371.5px;line-height:20px">通道<span class="l">3&nbsp;&nbsp;CAN1-1 </span>回路<span class="l">3</span></div>
<div class="cell" style="left:227px;top:371.5px;line-height:20px"><span class="l">5</span></div>
<div class="cell" style="left:274px;top:371.5px;line-height:20px">壁挂安全出口标志灯<span class="l">(</span>智能型<span class="l">)</span></div>
<div class="cell" style="left:533px;top:371.5px;line-height:20px">临波庭<span class="l">8</span>号楼<span class="l">/401-</span>地下二层</div>
<div class="cell" style="left:740px;top:371.5px;line-height:20px"><span class="l">1</span>单元地下二层过道</div>
<div class="cell" style="left:920px;top:371.5px;line-height:20px"><span class="l">8397010011</span></div>
<div class="cell" style="left:1144.5px;top:371.5px;line-height:20px">是</div>
<div class="a" style="left:19px;top:393px;width:1869px;height:25px;background:#ffffff"></div>
<div class="a" style="left:19px;top:417px;width:1869px;height:1px;background:rgba(0,0,0,0.11)"></div>
<div class="a" style="left:19px;top:418px;width:1869px;height:1px;background:#a0a0a0"></div>
<div class="a" style="left:11px;top:418px;width:8px;height:1px;background:#dedede"></div>
<div class="cell" style="left:23px;top:396.5px;line-height:20px"><span class="l">9</span></div>
<div class="cell" style="left:53px;top:396.5px;line-height:20px">通道<span class="l">3&nbsp;&nbsp;CAN1-1 </span>回路<span class="l">3</span></div>
<div class="cell" style="left:227px;top:396.5px;line-height:20px"><span class="l">6</span></div>
<div class="cell" style="left:274px;top:396.5px;line-height:20px">壁挂楼层标志灯<span>0F-9F</span>之外<span class="l">(</span>智能型<span class="l">)</span></div>
<div class="cell" style="left:533px;top:396.5px;line-height:20px">临波庭<span class="l">8</span>号楼<span class="l">/401-</span>地下二层</div>
<div class="cell" style="left:740px;top:396.5px;line-height:20px"><span class="l">1</span>单元地下一层楼梯间</div>
<div class="cell" style="left:920px;top:396.5px;line-height:20px"><span class="l">6961020010</span></div>
<div class="cell" style="left:1144.5px;top:396.5px;line-height:20px">是</div>
<div class="a" style="left:19px;top:419px;width:1869px;height:24px;background:#e8e8e8"></div>
<div class="a" style="left:19px;top:442px;width:1869px;height:1px;background:rgba(0,0,0,0.11)"></div>
<div class="a" style="left:19px;top:443px;width:1869px;height:1px;background:#a0a0a0"></div>
<div class="a" style="left:11px;top:443px;width:8px;height:1px;background:#dedede"></div>
<div class="cell" style="left:23px;top:422.5px;line-height:20px"><span class="l">10</span></div>
<div class="cell" style="left:53px;top:422.5px;line-height:20px">通道<span class="l">3&nbsp;&nbsp;CAN1-1 </span>回路<span class="l">3</span></div>
<div class="cell" style="left:227px;top:422.5px;line-height:20px"><span class="l">7</span></div>
<div class="cell" style="left:274px;top:422.5px;line-height:20px">壁挂楼层标志灯<span>0F-9F</span>之外<span class="l">(</span>智能型<span class="l">)</span></div>
<div class="cell" style="left:533px;top:422.5px;line-height:20px">临波庭<span class="l">8</span>号楼<span class="l">/401-</span>地下二层</div>
<div class="cell" style="left:740px;top:422.5px;line-height:20px"><span class="l">2</span>单元地下二层楼梯间</div>
<div class="cell" style="left:920px;top:422.5px;line-height:20px"><span class="l">6961020019</span></div>
<div class="cell" style="left:1144.5px;top:422.5px;line-height:20px">是</div>
<div class="a" style="left:19px;top:444px;width:1869px;height:24px;background:#ffffff"></div>
<div class="a" style="left:19px;top:467px;width:1869px;height:1px;background:rgba(0,0,0,0.11)"></div>
<div class="a" style="left:19px;top:468px;width:1869px;height:1px;background:#a0a0a0"></div>
<div class="a" style="left:11px;top:468px;width:8px;height:1px;background:#dedede"></div>
<div class="cell" style="left:23px;top:447.5px;line-height:20px"><span class="l">11</span></div>
<div class="cell" style="left:53px;top:447.5px;line-height:20px">通道<span class="l">3&nbsp;&nbsp;CAN1-1 </span>回路<span class="l">3</span></div>
<div class="cell" style="left:227px;top:447.5px;line-height:20px"><span class="l">8</span></div>
<div class="cell" style="left:274px;top:447.5px;line-height:20px">壁挂安全出口标志灯<span class="l">(</span>智能型<span class="l">)</span></div>
<div class="cell" style="left:533px;top:447.5px;line-height:20px">临波庭<span class="l">8</span>号楼<span class="l">/401-</span>地下二层</div>
<div class="cell" style="left:740px;top:447.5px;line-height:20px"><span class="l">2</span>单元地下二层过道</div>
<div class="cell" style="left:920px;top:447.5px;line-height:20px"><span class="l">8397010107</span></div>
<div class="cell" style="left:1144.5px;top:447.5px;line-height:20px">是</div>
<div class="a" style="left:19px;top:469px;width:1869px;height:24px;background:#e8e8e8"></div>
<div class="a" style="left:19px;top:492px;width:1869px;height:1px;background:rgba(0,0,0,0.11)"></div>
<div class="a" style="left:19px;top:493px;width:1869px;height:1px;background:#a0a0a0"></div>
<div class="a" style="left:11px;top:493px;width:8px;height:1px;background:#dedede"></div>
<div class="cell" style="left:23px;top:472.5px;line-height:20px"><span class="l">12</span></div>
<div class="cell" style="left:53px;top:472.5px;line-height:20px">通道<span class="l">3&nbsp;&nbsp;CAN1-1 </span>回路<span class="l">3</span></div>
<div class="cell" style="left:227px;top:472.5px;line-height:20px"><span class="l">9</span></div>
<div class="cell" style="left:274px;top:472.5px;line-height:20px">壁挂左向标志灯<span class="l">(</span>智能型<span class="l">)</span></div>
<div class="cell" style="left:533px;top:472.5px;line-height:20px">临波庭<span class="l">8</span>号楼<span class="l">/401-</span>地下二层</div>
<div class="cell" style="left:740px;top:472.5px;line-height:20px"><span class="l">2</span>单元地下二层过道</div>
<div class="cell" style="left:920px;top:472.5px;line-height:20px"><span class="l">7259011018</span></div>
<div class="cell" style="left:1144.5px;top:472.5px;line-height:20px">是</div>
<div class="a" style="left:19px;top:494px;width:1869px;height:25px;background:#ffffff"></div>
<div class="a" style="left:19px;top:518px;width:1869px;height:1px;background:rgba(0,0,0,0.11)"></div>
<div class="a" style="left:19px;top:519px;width:1869px;height:1px;background:#a0a0a0"></div>
<div class="a" style="left:11px;top:519px;width:8px;height:1px;background:#dedede"></div>
<div class="cell" style="left:23px;top:497.5px;line-height:20px"><span class="l">13</span></div>
<div class="cell" style="left:53px;top:497.5px;line-height:20px">通道<span class="l">3&nbsp;&nbsp;CAN1-1 </span>回路<span class="l">3</span></div>
<div class="cell" style="left:227px;top:497.5px;line-height:20px"><span class="l">10</span></div>
<div class="cell" style="left:274px;top:497.5px;line-height:20px">壁挂右向标志灯<span class="l">(</span>智能型<span class="l">)</span></div>
<div class="cell" style="left:533px;top:497.5px;line-height:20px">临波庭<span class="l">8</span>号楼<span class="l">/401-</span>地下二层</div>
<div class="cell" style="left:740px;top:497.5px;line-height:20px"><span class="l">2</span>单元地下二层过道</div>
<div class="cell" style="left:920px;top:497.5px;line-height:20px"><span class="l">7259020009</span></div>
<div class="cell" style="left:1144.5px;top:497.5px;line-height:20px">是</div>
<div class="a" style="left:19px;top:520px;width:1869px;height:24px;background:#e8e8e8"></div>
<div class="a" style="left:19px;top:543px;width:1869px;height:1px;background:rgba(0,0,0,0.11)"></div>
<div class="a" style="left:19px;top:544px;width:1869px;height:1px;background:#a0a0a0"></div>
<div class="a" style="left:11px;top:544px;width:8px;height:1px;background:#dedede"></div>
<div class="cell" style="left:23px;top:523.5px;line-height:20px"><span class="l">14</span></div>
<div class="cell" style="left:53px;top:523.5px;line-height:20px">通道<span class="l">4&nbsp;&nbsp;CAN1-1 </span>回路<span class="l">4</span></div>
<div class="cell" style="left:227px;top:523.5px;line-height:20px"><span class="l">1</span></div>
<div class="cell" style="left:274px;top:523.5px;line-height:20px">应急照明灯<span class="l">(6W)</span></div>
<div class="cell" style="left:533px;top:523.5px;line-height:20px">临波庭<span class="l">8</span>号楼<span class="l">/401-</span>地下二层</div>
<div class="cell" style="left:740px;top:523.5px;line-height:20px"><span class="l">2</span>单元地下二层过道</div>
<div class="cell" style="left:920px;top:523.5px;line-height:20px"><span class="l">8983010063</span></div>
<div class="cell" style="left:1144.5px;top:523.5px;line-height:20px">是</div>
<div class="a" style="left:19px;top:545px;width:1869px;height:24px;background:#ffffff"></div>
<div class="a" style="left:19px;top:568px;width:1869px;height:1px;background:rgba(0,0,0,0.11)"></div>
<div class="a" style="left:19px;top:569px;width:1869px;height:1px;background:#a0a0a0"></div>
<div class="a" style="left:11px;top:569px;width:8px;height:1px;background:#dedede"></div>
<div class="cell" style="left:23px;top:548.5px;line-height:20px"><span class="l">15</span></div>
<div class="cell" style="left:53px;top:548.5px;line-height:20px">通道<span class="l">4&nbsp;&nbsp;CAN1-1 </span>回路<span class="l">4</span></div>
<div class="cell" style="left:227px;top:548.5px;line-height:20px"><span class="l">2</span></div>
<div class="cell" style="left:274px;top:548.5px;line-height:20px">应急照明灯<span class="l">(6W)</span></div>
<div class="cell" style="left:533px;top:548.5px;line-height:20px">临波庭<span class="l">8</span>号楼<span class="l">/401-</span>地下二层</div>
<div class="cell" style="left:740px;top:548.5px;line-height:20px"><span class="l">2</span>单元地下二层过道</div>
<div class="cell" style="left:920px;top:548.5px;line-height:20px"><span class="l">8983010108</span></div>
<div class="cell" style="left:1144.5px;top:548.5px;line-height:20px">是</div>
<div class="a" style="left:19px;top:570px;width:1869px;height:24px;background:#e8e8e8"></div>
<div class="a" style="left:19px;top:593px;width:1869px;height:1px;background:rgba(0,0,0,0.11)"></div>
<div class="a" style="left:19px;top:594px;width:1869px;height:1px;background:#a0a0a0"></div>
<div class="a" style="left:11px;top:594px;width:8px;height:1px;background:#dedede"></div>
<div class="cell" style="left:23px;top:573.5px;line-height:20px"><span class="l">16</span></div>
<div class="cell" style="left:53px;top:573.5px;line-height:20px">通道<span class="l">4&nbsp;&nbsp;CAN1-1 </span>回路<span class="l">4</span></div>
<div class="cell" style="left:227px;top:573.5px;line-height:20px"><span class="l">3</span></div>
<div class="cell" style="left:274px;top:573.5px;line-height:20px">壁挂右向标志灯<span class="l">(</span>智能型<span class="l">)</span></div>
<div class="cell" style="left:533px;top:573.5px;line-height:20px">临波庭<span class="l">8</span>号楼<span class="l">/401-</span>地下二层</div>
<div class="cell" style="left:740px;top:573.5px;line-height:20px"><span class="l">2</span>单元地下二层过道</div>
<div class="cell" style="left:920px;top:573.5px;line-height:20px"><span class="l">7259020110</span></div>
<div class="cell" style="left:1144.5px;top:573.5px;line-height:20px">是</div>
<div class="a" style="left:19px;top:595px;width:1869px;height:24px;background:#ffffff"></div>
<div class="a" style="left:19px;top:618px;width:1869px;height:1px;background:rgba(0,0,0,0.11)"></div>
<div class="a" style="left:19px;top:619px;width:1869px;height:1px;background:#a0a0a0"></div>
<div class="a" style="left:11px;top:619px;width:8px;height:1px;background:#dedede"></div>
<div class="cell" style="left:23px;top:598.5px;line-height:20px"><span class="l">17</span></div>
<div class="cell" style="left:53px;top:598.5px;line-height:20px">通道<span class="l">4&nbsp;&nbsp;CAN1-1 </span>回路<span class="l">4</span></div>
<div class="cell" style="left:227px;top:598.5px;line-height:20px"><span class="l">4</span></div>
<div class="cell" style="left:274px;top:598.5px;line-height:20px">壁挂右向标志灯<span class="l">(</span>智能型<span class="l">)</span></div>
<div class="cell" style="left:533px;top:598.5px;line-height:20px">临波庭<span class="l">8</span>号楼<span class="l">/401-</span>地下二层</div>
<div class="cell" style="left:740px;top:598.5px;line-height:20px"><span class="l">2</span>单元地下二层过道</div>
<div class="cell" style="left:920px;top:598.5px;line-height:20px"><span class="l">7259020111</span></div>
<div class="cell" style="left:1144.5px;top:598.5px;line-height:20px">是</div>
<div class="a" style="left:19px;top:620px;width:1869px;height:25px;background:#e8e8e8"></div>
<div class="a" style="left:19px;top:644px;width:1869px;height:1px;background:rgba(0,0,0,0.11)"></div>
<div class="a" style="left:19px;top:645px;width:1869px;height:1px;background:#a0a0a0"></div>
<div class="a" style="left:11px;top:645px;width:8px;height:1px;background:#dedede"></div>
<div class="cell" style="left:23px;top:623.5px;line-height:20px"><span class="l">18</span></div>
<div class="cell" style="left:53px;top:623.5px;line-height:20px">通道<span class="l">4&nbsp;&nbsp;CAN1-1 </span>回路<span class="l">4</span></div>
<div class="cell" style="left:227px;top:623.5px;line-height:20px"><span class="l">5</span></div>
<div class="cell" style="left:274px;top:623.5px;line-height:20px">壁挂右向标志灯<span class="l">(</span>智能型<span class="l">)</span></div>
<div class="cell" style="left:533px;top:623.5px;line-height:20px">临波庭<span class="l">8</span>号楼<span class="l">/401-</span>地下二层</div>
<div class="cell" style="left:740px;top:623.5px;line-height:20px"><span class="l">2</span>单元地下二层过道</div>
<div class="cell" style="left:920px;top:623.5px;line-height:20px"><span class="l">7259020112</span></div>
<div class="cell" style="left:1144.5px;top:623.5px;line-height:20px">是</div>
<div class="a" style="left:19px;top:646px;width:1869px;height:24px;background:#ffffff"></div>
<div class="a" style="left:19px;top:669px;width:1869px;height:1px;background:rgba(0,0,0,0.11)"></div>
<div class="a" style="left:19px;top:670px;width:1869px;height:1px;background:#a0a0a0"></div>
<div class="a" style="left:11px;top:670px;width:8px;height:1px;background:#dedede"></div>
<div class="cell" style="left:23px;top:649.5px;line-height:20px"><span class="l">19</span></div>
<div class="cell" style="left:53px;top:649.5px;line-height:20px">通道<span class="l">4&nbsp;&nbsp;CAN1-1 </span>回路<span class="l">4</span></div>
<div class="cell" style="left:227px;top:649.5px;line-height:20px"><span class="l">6</span></div>
<div class="cell" style="left:274px;top:649.5px;line-height:20px">壁挂右向标志灯<span class="l">(</span>智能型<span class="l">)</span></div>
<div class="cell" style="left:533px;top:649.5px;line-height:20px">临波庭<span class="l">8</span>号楼<span class="l">/401-</span>地下二层</div>
<div class="cell" style="left:740px;top:649.5px;line-height:20px"><span class="l">2</span>单元地下二层过道</div>
<div class="cell" style="left:920px;top:649.5px;line-height:20px"><span class="l">7259020114</span></div>
<div class="cell" style="left:1144.5px;top:649.5px;line-height:20px">是</div>
<div class="a" style="left:19px;top:671px;width:1869px;height:24px;background:#e8e8e8"></div>
<div class="a" style="left:19px;top:694px;width:1869px;height:1px;background:rgba(0,0,0,0.11)"></div>
<div class="a" style="left:19px;top:695px;width:1869px;height:1px;background:#a0a0a0"></div>
<div class="a" style="left:11px;top:695px;width:8px;height:1px;background:#dedede"></div>
<div class="cell" style="left:23px;top:674.5px;line-height:20px"><span class="l">20</span></div>
<div class="cell" style="left:53px;top:674.5px;line-height:20px">通道<span class="l">4&nbsp;&nbsp;CAN1-1 </span>回路<span class="l">4</span></div>
<div class="cell" style="left:227px;top:674.5px;line-height:20px"><span class="l">7</span></div>
<div class="cell" style="left:274px;top:674.5px;line-height:20px">壁挂右向标志灯<span class="l">(</span>智能型<span class="l">)</span></div>
<div class="cell" style="left:533px;top:674.5px;line-height:20px">临波庭<span class="l">8</span>号楼<span class="l">/401-</span>地下二层</div>
<div class="cell" style="left:740px;top:674.5px;line-height:20px"><span class="l">2</span>单元地下二层过道</div>
<div class="cell" style="left:920px;top:674.5px;line-height:20px"><span class="l">7259020115</span></div>
<div class="cell" style="left:1144.5px;top:674.5px;line-height:20px">是</div>
<div class="a" style="left:19px;top:696px;width:1869px;height:24px;background:#ffffff"></div>
<div class="a" style="left:19px;top:719px;width:1869px;height:1px;background:rgba(0,0,0,0.11)"></div>
<div class="a" style="left:19px;top:720px;width:1869px;height:1px;background:#a0a0a0"></div>
<div class="a" style="left:11px;top:720px;width:8px;height:1px;background:#dedede"></div>
<div class="cell" style="left:23px;top:699.5px;line-height:20px"><span class="l">21</span></div>
<div class="cell" style="left:53px;top:699.5px;line-height:20px">通道<span class="l">4&nbsp;&nbsp;CAN1-1 </span>回路<span class="l">4</span></div>
<div class="cell" style="left:227px;top:699.5px;line-height:20px"><span class="l">8</span></div>
<div class="cell" style="left:274px;top:699.5px;line-height:20px">壁挂安全出口标志灯<span class="l">(</span>智能型<span class="l">)</span></div>
<div class="cell" style="left:533px;top:699.5px;line-height:20px">临波庭<span class="l">8</span>号楼<span class="l">/401-</span>地下二层</div>
<div class="cell" style="left:740px;top:699.5px;line-height:20px"><span class="l">1</span>单元地下二层过道</div>
<div class="cell" style="left:920px;top:699.5px;line-height:20px"><span class="l">8397010004</span></div>
<div class="cell" style="left:1144.5px;top:699.5px;line-height:20px">是</div>
<div class="a" style="left:19px;top:721px;width:1869px;height:24px;background:#e8e8e8"></div>
<div class="a" style="left:19px;top:744px;width:1869px;height:1px;background:rgba(0,0,0,0.11)"></div>
<div class="a" style="left:19px;top:745px;width:1869px;height:1px;background:#a0a0a0"></div>
<div class="a" style="left:11px;top:745px;width:8px;height:1px;background:#dedede"></div>
<div class="cell" style="left:23px;top:724.5px;line-height:20px"><span class="l">22</span></div>
<div class="cell" style="left:53px;top:724.5px;line-height:20px">通道<span class="l">4&nbsp;&nbsp;CAN1-1 </span>回路<span class="l">4</span></div>
<div class="cell" style="left:227px;top:724.5px;line-height:20px"><span class="l">9</span></div>
<div class="cell" style="left:274px;top:724.5px;line-height:20px">壁挂安全出口标志灯<span class="l">(</span>智能型<span class="l">)</span></div>
<div class="cell" style="left:533px;top:724.5px;line-height:20px">临波庭<span class="l">8</span>号楼<span class="l">/401-</span>地下二层</div>
<div class="cell" style="left:740px;top:724.5px;line-height:20px"><span class="l">1</span>单元地下二层过道</div>
<div class="cell" style="left:920px;top:724.5px;line-height:20px"><span class="l">8397010005</span></div>
<div class="cell" style="left:1144.5px;top:724.5px;line-height:20px">是</div>
<div class="a" style="left:19px;top:746px;width:1869px;height:25px;background:#ffffff"></div>
<div class="a" style="left:19px;top:770px;width:1869px;height:1px;background:rgba(0,0,0,0.11)"></div>
<div class="a" style="left:19px;top:771px;width:1869px;height:1px;background:#a0a0a0"></div>
<div class="a" style="left:11px;top:771px;width:8px;height:1px;background:#dedede"></div>
<div class="cell" style="left:23px;top:749.5px;line-height:20px"><span class="l">23</span></div>
<div class="cell" style="left:53px;top:749.5px;line-height:20px">通道<span class="l">4&nbsp;&nbsp;CAN1-1 </span>回路<span class="l">4</span></div>
<div class="cell" style="left:227px;top:749.5px;line-height:20px"><span class="l">10</span></div>
<div class="cell" style="left:274px;top:749.5px;line-height:20px">壁挂安全出口标志灯<span class="l">(</span>智能型<span class="l">)</span></div>
<div class="cell" style="left:533px;top:749.5px;line-height:20px">临波庭<span class="l">8</span>号楼<span class="l">/401-</span>地下二层</div>
<div class="cell" style="left:740px;top:749.5px;line-height:20px"><span class="l">1</span>单元地下二层过道</div>
<div class="cell" style="left:920px;top:749.5px;line-height:20px"><span class="l">8397010007</span></div>
<div class="cell" style="left:1144.5px;top:749.5px;line-height:20px">是</div>
<div class="a" style="left:19px;top:772px;width:1869px;height:24px;background:#e8e8e8"></div>
<div class="a" style="left:19px;top:795px;width:1869px;height:1px;background:rgba(0,0,0,0.11)"></div>
<div class="a" style="left:19px;top:796px;width:1869px;height:1px;background:#a0a0a0"></div>
<div class="a" style="left:11px;top:796px;width:8px;height:1px;background:#dedede"></div>
<div class="cell" style="left:23px;top:775.5px;line-height:20px"><span class="l">24</span></div>
<div class="cell" style="left:53px;top:775.5px;line-height:20px">通道<span class="l">4&nbsp;&nbsp;CAN1-1 </span>回路<span class="l">4</span></div>
<div class="cell" style="left:227px;top:775.5px;line-height:20px"><span class="l">11</span></div>
<div class="cell" style="left:274px;top:775.5px;line-height:20px">壁挂安全出口标志灯<span class="l">(</span>智能型<span class="l">)</span></div>
<div class="cell" style="left:533px;top:775.5px;line-height:20px">临波庭<span class="l">8</span>号楼<span class="l">/401-</span>地下二层</div>
<div class="cell" style="left:740px;top:775.5px;line-height:20px"><span class="l">2</span>单元地下二层过道</div>
<div class="cell" style="left:920px;top:775.5px;line-height:20px"><span class="l">8397010045</span></div>
<div class="cell" style="left:1144.5px;top:775.5px;line-height:20px">是</div>
<div class="a" style="left:19px;top:797px;width:1869px;height:24px;background:#ffffff"></div>
<div class="a" style="left:19px;top:820px;width:1869px;height:1px;background:rgba(0,0,0,0.11)"></div>
<div class="a" style="left:19px;top:821px;width:1869px;height:1px;background:#a0a0a0"></div>
<div class="a" style="left:11px;top:821px;width:8px;height:1px;background:#dedede"></div>
<div class="cell" style="left:23px;top:800.5px;line-height:20px"><span class="l">25</span></div>
<div class="cell" style="left:53px;top:800.5px;line-height:20px">通道<span class="l">4&nbsp;&nbsp;CAN1-1 </span>回路<span class="l">4</span></div>
<div class="cell" style="left:227px;top:800.5px;line-height:20px"><span class="l">12</span></div>
<div class="cell" style="left:274px;top:800.5px;line-height:20px">多信息复合灯<span class="l">(</span>智能型<span class="l">)</span></div>
<div class="cell" style="left:533px;top:800.5px;line-height:20px">临波庭<span class="l">8</span>号楼<span class="l">/401-</span>地下二层</div>
<div class="cell" style="left:740px;top:800.5px;line-height:20px"><span class="l">2</span>单元地下二层过道</div>
<div class="cell" style="left:920px;top:800.5px;line-height:20px"><span class="l">12106023992190</span></div>
<div class="cell" style="left:1144.5px;top:800.5px;line-height:20px">是</div>
<div class="a" style="left:19px;top:822px;width:1869px;height:24px;background:#e8e8e8"></div>
<div class="a" style="left:19px;top:845px;width:1869px;height:1px;background:rgba(0,0,0,0.11)"></div>
<div class="a" style="left:19px;top:846px;width:1869px;height:1px;background:#a0a0a0"></div>
<div class="a" style="left:11px;top:846px;width:8px;height:1px;background:#dedede"></div>
<div class="cell" style="left:23px;top:825.5px;line-height:20px"><span class="l">26</span></div>
<div class="cell" style="left:53px;top:825.5px;line-height:20px">通道<span class="l">4&nbsp;&nbsp;CAN1-1 </span>回路<span class="l">4</span></div>
<div class="cell" style="left:227px;top:825.5px;line-height:20px"><span class="l">13</span></div>
<div class="cell" style="left:274px;top:825.5px;line-height:20px">应急照明灯<span class="l">(6W)</span></div>
<div class="cell" style="left:533px;top:825.5px;line-height:20px">临波庭<span class="l">8</span>号楼<span class="l">/401-</span>地下二层</div>
<div class="cell" style="left:740px;top:825.5px;line-height:20px"><span class="l">2</span>单元地下二层过道</div>
<div class="cell" style="left:920px;top:825.5px;line-height:20px"><span class="l">8863010210</span></div>
<div class="cell" style="left:1144.5px;top:825.5px;line-height:20px">是</div>
<div class="a" style="left:19px;top:847px;width:1869px;height:25px;background:#ffffff"></div>
<div class="a" style="left:19px;top:871px;width:1869px;height:1px;background:rgba(0,0,0,0.11)"></div>
<div class="a" style="left:19px;top:872px;width:1869px;height:1px;background:#a0a0a0"></div>
<div class="a" style="left:11px;top:872px;width:8px;height:1px;background:#dedede"></div>
<div class="cell" style="left:23px;top:850.5px;line-height:20px"><span class="l">27</span></div>
<div class="cell" style="left:53px;top:850.5px;line-height:20px">通道<span class="l">4&nbsp;&nbsp;CAN1-1 </span>回路<span class="l">4</span></div>
<div class="cell" style="left:227px;top:850.5px;line-height:20px"><span class="l">14</span></div>
<div class="cell" style="left:274px;top:850.5px;line-height:20px">壁挂左向标志灯<span class="l">(</span>智能型<span class="l">)</span></div>
<div class="cell" style="left:533px;top:850.5px;line-height:20px">临波庭<span class="l">8</span>号楼<span class="l">/401-</span>地下二层</div>
<div class="cell" style="left:740px;top:850.5px;line-height:20px"><span class="l">2</span>单元地下二层过道</div>
<div class="cell" style="left:920px;top:850.5px;line-height:20px"><span class="l">7259011007</span></div>
<div class="cell" style="left:1144.5px;top:850.5px;line-height:20px">是</div>
<div class="a" style="left:19px;top:873px;width:1869px;height:24px;background:#e8e8e8"></div>
<div class="a" style="left:19px;top:896px;width:1869px;height:1px;background:rgba(0,0,0,0.11)"></div>
<div class="a" style="left:19px;top:897px;width:1869px;height:1px;background:#a0a0a0"></div>
<div class="a" style="left:11px;top:897px;width:8px;height:1px;background:#dedede"></div>
<div class="cell" style="left:23px;top:876.5px;line-height:20px"><span class="l">28</span></div>
<div class="cell" style="left:53px;top:876.5px;line-height:20px">通道<span class="l">4&nbsp;&nbsp;CAN1-1 </span>回路<span class="l">4</span></div>
<div class="cell" style="left:227px;top:876.5px;line-height:20px"><span class="l">15</span></div>
<div class="cell" style="left:274px;top:876.5px;line-height:20px">壁挂左向标志灯<span class="l">(</span>智能型<span class="l">)</span></div>
<div class="cell" style="left:533px;top:876.5px;line-height:20px">临波庭<span class="l">8</span>号楼<span class="l">/401-</span>地下二层</div>
<div class="cell" style="left:740px;top:876.5px;line-height:20px"><span class="l">2</span>单元地下二层过道</div>
<div class="cell" style="left:920px;top:876.5px;line-height:20px"><span class="l">7259011008</span></div>
<div class="cell" style="left:1144.5px;top:876.5px;line-height:20px">是</div>
<div class="a" style="left:19px;top:898px;width:1869px;height:24px;background:#ffffff"></div>
<div class="a" style="left:19px;top:921px;width:1869px;height:1px;background:rgba(0,0,0,0.11)"></div>
<div class="a" style="left:19px;top:922px;width:1869px;height:1px;background:#a0a0a0"></div>
<div class="a" style="left:11px;top:922px;width:8px;height:1px;background:#dedede"></div>
<div class="cell" style="left:23px;top:901.5px;line-height:20px"><span class="l">29</span></div>
<div class="cell" style="left:53px;top:901.5px;line-height:20px">通道<span class="l">4&nbsp;&nbsp;CAN1-1 </span>回路<span class="l">4</span></div>
<div class="cell" style="left:227px;top:901.5px;line-height:20px"><span class="l">16</span></div>
<div class="cell" style="left:274px;top:901.5px;line-height:20px">壁挂左向标志灯<span class="l">(</span>智能型<span class="l">)</span></div>
<div class="cell" style="left:533px;top:901.5px;line-height:20px">临波庭<span class="l">8</span>号楼<span class="l">/401-</span>地下二层</div>
<div class="cell" style="left:740px;top:901.5px;line-height:20px"><span class="l">2</span>单元地下二层过道</div>
<div class="cell" style="left:920px;top:901.5px;line-height:20px"><span class="l">7259011009</span></div>
<div class="cell" style="left:1144.5px;top:901.5px;line-height:20px">是</div>
<div class="a" style="left:19px;top:923px;width:1869px;height:24px;background:#e8e8e8"></div>
<div class="a" style="left:19px;top:946px;width:1869px;height:1px;background:rgba(0,0,0,0.11)"></div>
<div class="a" style="left:19px;top:947px;width:1869px;height:1px;background:#a0a0a0"></div>
<div class="a" style="left:11px;top:947px;width:8px;height:1px;background:#dedede"></div>
<div class="cell" style="left:23px;top:926.5px;line-height:20px"><span class="l">30</span></div>
<div class="cell" style="left:53px;top:926.5px;line-height:20px">通道<span class="l">4&nbsp;&nbsp;CAN1-1 </span>回路<span class="l">4</span></div>
<div class="cell" style="left:227px;top:926.5px;line-height:20px"><span class="l">17</span></div>
<div class="cell" style="left:274px;top:926.5px;line-height:20px">壁挂左向标志灯<span class="l">(</span>智能型<span class="l">)</span></div>
<div class="cell" style="left:533px;top:926.5px;line-height:20px">临波庭<span class="l">8</span>号楼<span class="l">/401-</span>地下二层</div>
<div class="cell" style="left:740px;top:926.5px;line-height:20px"><span class="l">2</span>单元地下二层过道</div>
<div class="cell" style="left:920px;top:926.5px;line-height:20px"><span class="l">7259011010</span></div>
<div class="cell" style="left:1144.5px;top:926.5px;line-height:20px">是</div>
<div class="a" style="left:19px;top:948px;width:1869px;height:24px;background:#ffffff"></div>
<div class="a" style="left:19px;top:971px;width:1869px;height:1px;background:rgba(0,0,0,0.11)"></div>
<div class="a" style="left:19px;top:972px;width:1869px;height:1px;background:#a0a0a0"></div>
<div class="a" style="left:11px;top:972px;width:8px;height:1px;background:#dedede"></div>
<div class="cell" style="left:23px;top:951.5px;line-height:20px"><span class="l">31</span></div>
<div class="cell" style="left:53px;top:951.5px;line-height:20px">通道<span class="l">4&nbsp;&nbsp;CAN1-1 </span>回路<span class="l">4</span></div>
<div class="cell" style="left:227px;top:951.5px;line-height:20px"><span class="l">18</span></div>
<div class="cell" style="left:274px;top:951.5px;line-height:20px">多信息复合灯<span class="l">(</span>智能型<span class="l">)</span></div>
<div class="cell" style="left:533px;top:951.5px;line-height:20px">临波庭<span class="l">8</span>号楼<span class="l">/401-</span>地下二层</div>
<div class="cell" style="left:740px;top:951.5px;line-height:20px"><span class="l">2</span>单元地下二层过道</div>
<div class="cell" style="left:920px;top:951.5px;line-height:20px"><span class="l">12106022245080</span></div>
<div class="cell" style="left:1144.5px;top:951.5px;line-height:20px">是</div>
<div class="a" style="left:19px;top:973px;width:1869px;height:25px;background:#e8e8e8"></div>
<div class="a" style="left:19px;top:997px;width:1869px;height:1px;background:rgba(0,0,0,0.11)"></div>
<div class="a" style="left:19px;top:998px;width:1869px;height:1px;background:#a0a0a0"></div>
<div class="a" style="left:11px;top:998px;width:8px;height:1px;background:#dedede"></div>
<div class="cell" style="left:23px;top:976.5px;line-height:20px"><span class="l">32</span></div>
<div class="cell" style="left:53px;top:976.5px;line-height:20px">通道<span class="l">4&nbsp;&nbsp;CAN1-1 </span>回路<span class="l">4</span></div>
<div class="cell" style="left:227px;top:976.5px;line-height:20px"><span class="l">19</span></div>
<div class="cell" style="left:274px;top:976.5px;line-height:20px">应急照明灯<span class="l">(6W)</span></div>
<div class="cell" style="left:533px;top:976.5px;line-height:20px">临波庭<span class="l">8</span>号楼<span class="l">/401-</span>地下二层</div>
<div class="cell" style="left:740px;top:976.5px;line-height:20px"><span class="l">1</span>单元地下二层过道</div>
<div class="cell" style="left:920px;top:976.5px;line-height:20px"><span class="l">8983010010</span></div>
<div class="cell" style="left:1144.5px;top:976.5px;line-height:20px">是</div>
<div class="a" style="left:19px;top:999px;width:1869px;height:24px;background:#ffffff"></div>
<div class="a" style="left:19px;top:1022px;width:1869px;height:1px;background:rgba(0,0,0,0.11)"></div>
<div class="a" style="left:19px;top:1023px;width:1869px;height:1px;background:#a0a0a0"></div>
<div class="a" style="left:11px;top:1023px;width:8px;height:1px;background:#dedede"></div>
<div class="cell" style="left:23px;top:1002.5px;line-height:20px"><span class="l">33</span></div>
<div class="cell" style="left:53px;top:1002.5px;line-height:20px">通道<span class="l">4&nbsp;&nbsp;CAN1-1 </span>回路<span class="l">4</span></div>
<div class="cell" style="left:227px;top:1002.5px;line-height:20px"><span class="l">20</span></div>
<div class="cell" style="left:274px;top:1002.5px;line-height:20px">应急照明灯<span class="l">(6W)</span></div>
<div class="cell" style="left:533px;top:1002.5px;line-height:20px">临波庭<span class="l">8</span>号楼<span class="l">/401-</span>地下二层</div>
<div class="cell" style="left:740px;top:1002.5px;line-height:20px"><span class="l">1</span>单元地下二层过道</div>
<div class="cell" style="left:920px;top:1002.5px;line-height:20px"><span class="l">8983010017</span></div>
<div class="cell" style="left:1144.5px;top:1002.5px;line-height:20px">是</div>
<div class="a" style="left:19px;top:1024px;width:1869px;height:24px;background:#e8e8e8"></div>
<div class="a" style="left:19px;top:1047px;width:1869px;height:1px;background:rgba(0,0,0,0.11)"></div>
<div class="a" style="left:19px;top:1048px;width:1869px;height:1px;background:#a0a0a0"></div>
<div class="a" style="left:11px;top:1048px;width:8px;height:1px;background:#dedede"></div>
<div class="cell" style="left:23px;top:1027.5px;line-height:20px"><span class="l">34</span></div>
<div class="cell" style="left:53px;top:1027.5px;line-height:20px">通道<span class="l">4&nbsp;&nbsp;CAN1-1 </span>回路<span class="l">4</span></div>
<div class="cell" style="left:227px;top:1027.5px;line-height:20px"><span class="l">21</span></div>
<div class="cell" style="left:274px;top:1027.5px;line-height:20px">多信息复合灯<span class="l">(</span>智能型<span class="l">)</span></div>
<div class="cell" style="left:533px;top:1027.5px;line-height:20px">临波庭<span class="l">8</span>号楼<span class="l">/401-</span>地下二层</div>
<div class="cell" style="left:740px;top:1027.5px;line-height:20px"><span class="l">1</span>单元地下一层电梯前室</div>
<div class="cell" style="left:920px;top:1027.5px;line-height:20px"><span class="l">12106022245090</span></div>
<div class="cell" style="left:1144.5px;top:1027.5px;line-height:20px">是</div>
<div class="a" style="left:19px;top:1049px;width:1869px;height:20px;background:#ffffff"></div>
<div class="cell" style="left:23px;top:1052.5px;line-height:20px"><span class="l">35</span></div>
<div class="cell" style="left:53px;top:1052.5px;line-height:20px">通道<span class="l">4&nbsp;&nbsp;CAN1-1 </span>回路<span class="l">4</span></div>
<div class="cell" style="left:227px;top:1052.5px;line-height:20px"><span class="l">22</span></div>
<div class="cell" style="left:274px;top:1052.5px;line-height:20px">应急照明灯<span class="l">(6W)</span></div>
<div class="cell" style="left:533px;top:1052.5px;line-height:20px">临波庭<span class="l">8</span>号楼<span class="l">/401-</span>地下二层</div>
<div class="cell" style="left:740px;top:1052.5px;line-height:20px"><span class="l">1</span>单元地下二层过道</div>
<div class="cell" style="left:920px;top:1052.5px;line-height:20px"><span class="l">8983010032</span></div>
<div class="cell" style="left:1144.5px;top:1052.5px;line-height:20px">是</div>
<div class="a" style="left:48px;top:192px;width:1px;height:877px;background:rgba(0,0,0,0.08)"></div>
<div class="a" style="left:49px;top:192px;width:1px;height:877px;background:#a0a0a0"></div>
<div class="a" style="left:221px;top:192px;width:1px;height:877px;background:rgba(0,0,0,0.08)"></div>
<div class="a" style="left:222px;top:192px;width:1px;height:877px;background:#a0a0a0"></div>
<div class="a" style="left:269px;top:192px;width:1px;height:877px;background:rgba(0,0,0,0.08)"></div>
<div class="a" style="left:270px;top:192px;width:1px;height:877px;background:#a0a0a0"></div>
<div class="a" style="left:527px;top:192px;width:1px;height:877px;background:rgba(0,0,0,0.08)"></div>
<div class="a" style="left:528px;top:192px;width:1px;height:877px;background:#a0a0a0"></div>
<div class="a" style="left:734px;top:192px;width:1px;height:877px;background:rgba(0,0,0,0.08)"></div>
<div class="a" style="left:735px;top:192px;width:1px;height:877px;background:#a0a0a0"></div>
<div class="a" style="left:915px;top:192px;width:1px;height:877px;background:rgba(0,0,0,0.08)"></div>
<div class="a" style="left:916px;top:192px;width:1px;height:877px;background:#a0a0a0"></div>
<div class="a" style="left:1057px;top:192px;width:1px;height:877px;background:rgba(0,0,0,0.08)"></div>
<div class="a" style="left:1058px;top:192px;width:1px;height:877px;background:#a0a0a0"></div>
<div class="a" style="left:1139px;top:192px;width:1px;height:877px;background:rgba(0,0,0,0.08)"></div>
<div class="a" style="left:1140px;top:192px;width:1px;height:877px;background:#a0a0a0"></div>
<div class="a" style="left:1222px;top:192px;width:1px;height:877px;background:rgba(0,0,0,0.08)"></div>
<div class="a" style="left:1223px;top:192px;width:1px;height:877px;background:#a0a0a0"></div>
<div class="a" style="left:11px;top:1069px;width:1898px;height:1px;background:#6d8db4"></div>
<div class="a" style="left:0;top:1070px;width:1918px;height:9px;background:#fff;border-left:1px solid #a9a9a9;border-right:1px solid #a9a9a9"></div>
<div class="a" style="left:0;top:1079px;width:1920px;height:1px;background:#a9a9a9"></div>
<div class="a" style="left:1888px;top:192px;width:21px;height:877px;background:#f0f0f0"></div>
<div class="a" style="left:1888px;top:213px;width:21px;height:10px;background:#cdcdcd"></div>
<svg class="a" style="left:1888px;top:192px" width="21" height="20"><path d="M6.3 13.6 L10.5 9.4 L14.7 13.6" fill="none" stroke="#999" stroke-width="2"/></svg>
<svg class="a" style="left:1888px;top:1049px" width="21" height="20"><path d="M6.3 8 L10.5 12.2 L14.7 8" fill="none" stroke="#999" stroke-width="2"/></svg>
</body></html>
